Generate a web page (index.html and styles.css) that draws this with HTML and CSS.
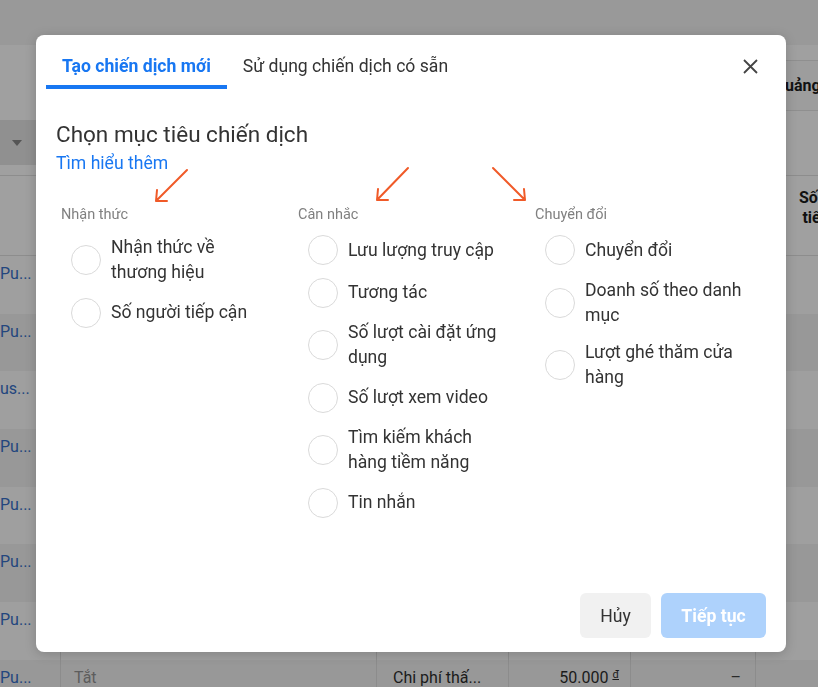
FILE: index.html
```html
<!DOCTYPE html>
<html lang="vi">
<head>
<meta charset="utf-8">
<title>Chọn mục tiêu chiến dịch</title>
<link rel="stylesheet" href="styles.css">
</head>
<body>
<div class="page">
  <div class="topbar"></div>
  <div class="toolbar">
    <div class="tb-left"><div class="filter"><span class="caret"></span></div></div>
    <div class="tb-right"><div class="tb-head">Quảng cáo</div></div>
  </div>
  <div class="trow thead">
    <div class="cell c0"></div><div class="cell c1"></div><div class="cell c2"></div><div class="cell c3"></div><div class="cell c4"></div><div class="cell c5 th">Số người tiếp cận</div>
  </div>
  <div class="trow odd"><div class="cell c0 name">Pu...</div><div class="cell c1 muted">Tắt</div><div class="cell c2">Chi phí thấ...</div><div class="cell c3">50.000 <span class="cur">đ</span></div><div class="cell c4">–</div><div class="cell c5"></div></div>
  <div class="trow even"><div class="cell c0 name">Pu...</div><div class="cell c1 muted">Tắt</div><div class="cell c2">Chi phí thấ...</div><div class="cell c3">50.000 <span class="cur">đ</span></div><div class="cell c4">–</div><div class="cell c5"></div></div>
  <div class="trow odd"><div class="cell c0 name">us...</div><div class="cell c1 muted">Tắt</div><div class="cell c2">Chi phí thấ...</div><div class="cell c3">50.000 <span class="cur">đ</span></div><div class="cell c4">–</div><div class="cell c5"></div></div>
  <div class="trow even"><div class="cell c0 name">Pu...</div><div class="cell c1 muted">Tắt</div><div class="cell c2">Chi phí thấ...</div><div class="cell c3">50.000 <span class="cur">đ</span></div><div class="cell c4">–</div><div class="cell c5"></div></div>
  <div class="trow odd"><div class="cell c0 name">Pu...</div><div class="cell c1 muted">Tắt</div><div class="cell c2">Chi phí thấ...</div><div class="cell c3">50.000 <span class="cur">đ</span></div><div class="cell c4">–</div><div class="cell c5"></div></div>
  <div class="trow even"><div class="cell c0 name">Pu...</div><div class="cell c1 muted">Tắt</div><div class="cell c2">Chi phí thấ...</div><div class="cell c3">50.000 <span class="cur">đ</span></div><div class="cell c4">–</div><div class="cell c5"></div></div>
  <div class="trow odd"><div class="cell c0 name">Pu...</div><div class="cell c1 muted">Tắt</div><div class="cell c2">Chi phí thấ...</div><div class="cell c3">50.000 <span class="cur">đ</span></div><div class="cell c4">–</div><div class="cell c5"></div></div>
  <div class="trow even"><div class="cell c0 name">Pu...</div><div class="cell c1 muted">Tắt</div><div class="cell c2">Chi phí thấ...</div><div class="cell c3">50.000 <span class="cur">đ</span></div><div class="cell c4">–</div><div class="cell c5"></div></div>
</div>

<div class="modal">
  <div class="tabs">
    <div class="tab active">Tạo chiến dịch mới</div>
    <div class="tab">Sử dụng chiến dịch có sẵn</div>
    <button class="close" aria-label="Đóng">
      <svg width="15" height="15" viewBox="0 0 15 15"><path d="M1 1L14 14M14 1L1 14"/></svg>
    </button>
  </div>
  <div class="content">
    <h2 class="title">Chọn mục tiêu chiến dịch</h2>
    <a class="learn">Tìm hiểu thêm</a>
    <div class="groups">
      <div class="group">
        <div class="g-title">Nhận thức</div>
        <div class="opts">
          <div class="opt"><span class="radio"></span><span class="label">Nhận thức về thương hiệu</span></div>
          <div class="opt"><span class="radio"></span><span class="label">Số người tiếp cận</span></div>
        </div>
      </div>
      <div class="group">
        <div class="g-title">Cân nhắc</div>
        <div class="opts">
          <div class="opt"><span class="radio"></span><span class="label">Lưu lượng truy cập</span></div>
          <div class="opt"><span class="radio"></span><span class="label">Tương tác</span></div>
          <div class="opt"><span class="radio"></span><span class="label">Số lượt cài đặt ứng dụng</span></div>
          <div class="opt"><span class="radio"></span><span class="label">Số lượt xem video</span></div>
          <div class="opt"><span class="radio"></span><span class="label">Tìm kiếm khách hàng tiềm năng</span></div>
          <div class="opt"><span class="radio"></span><span class="label">Tin nhắn</span></div>
        </div>
      </div>
      <div class="group">
        <div class="g-title">Chuyển đổi</div>
        <div class="opts">
          <div class="opt"><span class="radio"></span><span class="label">Chuyển đổi</span></div>
          <div class="opt"><span class="radio"></span><span class="label">Doanh số theo danh mục</span></div>
          <div class="opt"><span class="radio"></span><span class="label">Lượt ghé thăm cửa hàng</span></div>
        </div>
      </div>
    </div>
  </div>
  <div class="footer">
    <button class="btn cancel">Hủy</button>
    <button class="btn next">Tiếp tục</button>
  </div>
  <svg class="arrows" width="750" height="617" viewBox="0 0 750 617">
    <path d="M151 135L120 166M121 155L120 166L131 166"/>
    <path d="M372 133L341 165M342 154L341 165L352 165"/>
    <path d="M457 133L489 165M488 154L489 165L478 165"/>
  </svg>
</div>
</body>
</html>
```

FILE: styles.css
```css
html, body {
  margin: 0;
  padding: 0;
}
body {
  width: 818px;
  height: 687px;
  overflow: hidden;
  background: #9c9c9c;
  font-family: Roboto, "Noto Sans", sans-serif;
}

/* background page (dimmed) */
.page {
  width: 905px;
}
.topbar {
  height: 45px;
  background: #999999;
}
.toolbar {
  height: 130px;
  display: flex;
  background: #a0a0a0;
  border-bottom: 1px solid #8d8d8d;
}
.tb-left {
  width: 60px;
  padding-top: 75px;
}
.filter {
  height: 45px;
  background: #909090;
  display: flex;
  align-items: center;
}
.caret {
  margin-left: 12px;
  width: 0;
  height: 0;
  border-left: 5px solid transparent;
  border-right: 5px solid transparent;
  border-top: 6px solid #555555;
}
.tb-right {
  margin-left: 714px;
  width: 131px;
  padding-top: 15px;
}
.tb-head {
  height: 49px;
  line-height: 49px;
  border-top: 1px solid #8f8f8f;
  border-bottom: 1px solid #8f8f8f;
  background: #9d9d9d;
  font-size: 16px;
  font-weight: 700;
  color: #111111;
  white-space: nowrap;
}

.trow {
  display: grid;
  grid-template-columns: 60px 316px 132px 122px 125px 150px;
  height: 57.7px;
  box-sizing: border-box;
  font-size: 16px;
  line-height: 20px;
  color: #1b1b1b;
}
.thead {
  height: 80px;
  background: #a0a0a0;
  border-bottom: 1px solid #8d8d8d;
}
.odd { background: #9f9f9f; }
.even { background: #989898; }
.cell {
  padding-top: 8px;
  white-space: nowrap;
  overflow: hidden;
}
.c1, .c2, .c3, .c4, .c5 {
  border-left: 1px solid #8c8c8c;
}
.c1 { padding-left: 13px; }
.c2 { padding-left: 16px; }
.c3 { text-align: right; padding-right: 11px; }
.c4 { text-align: right; padding-right: 14px; color: #2a2a2a; }
.name { color: #23467e; }
.muted { color: #5d5d5d; }
.cur {
  font-size: 11px;
  line-height: 0;
  vertical-align: 5px;
  text-decoration: underline;
}
.th {
  padding: 12px 36px 0 38px;
  white-space: normal;
  text-align: center;
  font-weight: 700;
  color: #111111;
  border-left: 0;
}

/* modal */
.modal {
  position: fixed;
  left: 36px;
  top: 35px;
  width: 750px;
  height: 617px;
  box-sizing: border-box;
  background: #ffffff;
  border-radius: 8px;
  box-shadow: 0 2px 12px rgba(0, 0, 0, 0.18);
  display: flex;
  flex-direction: column;
}
.tabs {
  display: flex;
  padding-left: 10px;
}
.tab {
  padding: 20px 16px 8px;
  line-height: 22px;
  font-size: 17.6px;
  color: #333333;
  border-bottom: 4px solid transparent;
  white-space: nowrap;
}
.tab.active {
  color: #1877f2;
  font-weight: 700;
  border-bottom-color: #1877f2;
}
.close {
  margin: 19.5px 23.5px 0 auto;
  width: 24px;
  height: 24px;
  padding: 0;
  border: 0;
  background: none;
  display: flex;
  align-items: center;
  justify-content: center;
}
.close svg path {
  stroke: #444444;
  stroke-width: 1.8;
  fill: none;
}
.content {
  padding: 0 20px;
}
.title {
  margin: 31px 0 0;
  font-size: 22.5px;
  font-weight: 400;
  line-height: 28px;
  color: #333333;
}
.learn {
  display: block;
  margin-top: 4px;
  font-size: 17.6px;
  line-height: 22px;
  color: #1877f2;
}
.groups {
  display: grid;
  grid-template-columns: repeat(3, 237px);
  margin-top: 32px;
  padding-left: 5px;
}
.g-title {
  font-size: 14.5px;
  line-height: 18px;
  color: #808080;
}
.opts {
  display: flex;
  flex-direction: column;
  gap: 12.5px;
  margin-top: 11px;
}
.opt {
  display: flex;
  align-items: center;
  gap: 10px;
  padding-left: 10px;
}
.radio {
  flex: none;
  width: 30px;
  height: 30px;
  box-sizing: border-box;
  border: 1px solid #dadada;
  border-radius: 50%;
}
.label {
  width: 159px;
  font-size: 17.6px;
  line-height: 25px;
  color: #333333;
}
.footer {
  margin-top: auto;
  display: flex;
  justify-content: flex-end;
  gap: 10px;
  padding: 0 20px 14px;
}
.btn {
  height: 45px;
  border: 0;
  border-radius: 6px;
  font-family: Roboto, "Noto Sans", sans-serif;
  font-size: 17.6px;
  padding: 0;
}
.cancel {
  width: 71px;
  background: #f1f1f1;
  color: #333333;
}
.next {
  width: 105px;
  background: #aed2fc;
  color: #ffffff;
  font-weight: 700;
}
.arrows {
  position: absolute;
  left: 0;
  top: 0;
  pointer-events: none;
}
.arrows path {
  fill: none;
  stroke: #f05a28;
  stroke-width: 2;
  stroke-linecap: round;
  stroke-linejoin: round;
}
```
